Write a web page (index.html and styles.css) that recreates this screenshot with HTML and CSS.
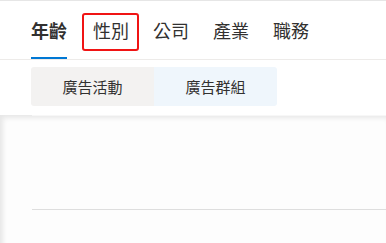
FILE: index.html
```html
<!DOCTYPE html>
<html lang="zh-Hant">
<head>
    <meta charset="UTF-8">
    <meta name="viewport" content="width=device-width, initial-scale=1.0">
    <title>受眾分析</title>
    <link rel="stylesheet" href="styles.css">
</head>
<body>
    <nav class="pivot">
        <a class="pivot-link selected">年齡</a>
        <a class="pivot-link marked">性別</a>
        <a class="pivot-link">公司</a>
        <a class="pivot-link">產業</a>
        <a class="pivot-link">職務</a>
    </nav>
    <div class="segments">
        <button class="segment">廣告活動</button>
        <button class="segment active">廣告群組</button>
    </div>
    <section class="panel">
        <div class="panel-body"></div>
        <div class="panel-footer"></div>
    </section>
</body>
</html>
```

FILE: styles.css
```css
body {
    font-family: "Noto Sans CJK TC", "Noto Sans", sans-serif;
    margin: 0;
    padding: 0;
    background-color: #fff;
    color: #323130;
    border-top: 1px solid #e6e6e6;
    overflow: hidden;
}

.pivot {
    display: flex;
    gap: 24px;
    padding-left: 31px;
    border-bottom: 1px solid #edebe9;
}

.pivot-link {
    position: relative;
    font-size: 18px;
    line-height: 18px;
    padding: 20px 0 18px;
    border-bottom: 2px solid transparent;
    cursor: pointer;
}

.pivot-link.selected {
    font-weight: 700;
    margin-right: 2px;
    border-bottom-color: #0078d4;
}

.pivot-link.marked::after {
    content: "";
    position: absolute;
    left: -11px;
    right: -10px;
    top: 12px;
    bottom: 6px;
    border: 2px solid #f01414;
    border-radius: 3px;
}

.segments {
    display: flex;
    margin: 7px 0 0 31px;
}

.segment {
    width: 123px;
    height: 39px;
    border: none;
    background-color: #f3f2f1;
    color: #323130;
    font-family: inherit;
    font-size: 15px;
    padding: 0;
    cursor: pointer;
}

.segment:first-child {
    border-radius: 3px 0 0 3px;
}

.segment.active {
    background-color: #eff6fc;
    border-radius: 0 3px 3px 0;
}

.panel {
    margin-top: 9px;
    height: 140px;
    background-color: #fdfdfd;
    box-shadow: inset 3px 3px 5px rgba(0, 0, 0, 0.09);
}

.panel-body {
    margin-left: 32px;
    height: 93px;
    border-top: 1px solid #f7f7f7;
    border-bottom: 1px solid #dedede;
}
```
